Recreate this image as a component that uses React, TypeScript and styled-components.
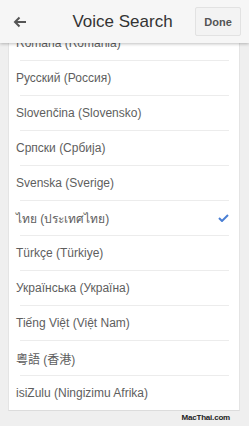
import React from 'react';
import styled, { createGlobalStyle } from 'styled-components';

const GlobalStyle = createGlobalStyle`
    html, body {
        margin: 0;
        padding: 0;
        background: #efefef;
        font-family: 'Liberation Sans', 'Noto Sans', 'Noto Sans CJK TC', sans-serif;
    }
`;

const Screen = styled.div`
    position: relative;
    width: 249px;
    height: 426px;
    overflow: hidden;
    background: #efefef;
`;

const Header = styled.div`
    position: absolute;
    top: 0;
    left: 0;
    right: 0;
    height: 43px;
    z-index: 2;
    display: flex;
    align-items: center;
    background: #f6f6f6;
    box-shadow: 0 1px 3px rgba(0, 0, 0, 0.25);
`;

const BackButton = styled.div`
    width: 40px;
    display: flex;
    justify-content: center;
    align-items: center;
    color: #555;
`;

const Title = styled.div`
    flex: 1;
    text-align: center;
    font-size: 17px;
    color: #333;
    padding-left: 10px;
`;

const DoneButton = styled.div`
    width: 44px;
    height: 27px;
    margin-right: 8px;
    display: flex;
    align-items: center;
    justify-content: center;
    border: 1px solid #e2e2e2;
    border-radius: 2px;
    background: #f3f3f3;
    font-size: 11px;
    font-weight: bold;
    color: #555;
`;

const Content = styled.div`
    padding: 26px 9px 0 8px;
`;

const Card = styled.div`
    background: #fff;
    border-left: 1px solid #e4e4e4;
    border-right: 1px solid #e4e4e4;
    border-bottom: 1px solid #dcdcdc;
    padding: 0 10px 0 11px;
`;

const Row = styled.div<{ $last?: boolean }>`
    height: 34px;
    display: flex;
    align-items: center;
    justify-content: space-between;
    border-bottom: ${({ $last }) => ($last ? 'none' : '1px solid #ececec')};
`;

const Label = styled.span`
    font-size: 12px;
    color: #5e5e5e;
    margin-left: -4px;
`;

const Watermark = styled.div`
    text-align: right;
    padding-right: 10px;
    margin-top: 2px;
    font-size: 8px;
    font-weight: bold;
    color: #222;
    letter-spacing: -0.2px;
`;

const languages = [
    'Română (România)',
    'Русский (Россия)',
    'Slovenčina (Slovensko)',
    'Српски (Србија)',
    'Svenska (Sverige)',
    'ไทย (ประเทศไทย)',
    'Türkçe (Türkiye)',
    'Українська (Україна)',
    'Tiếng Việt (Việt Nam)',
    '粵語 (香港)',
    'isiZulu (Ningizimu Afrika)',
];

const selected = 'ไทย (ประเทศไทย)';

const App: React.FC = () => {
    return (
        <Screen>
            <GlobalStyle />
            <Header>
                <BackButton>
                    <svg width="14" height="12" viewBox="0 0 14 12" fill="none" stroke="#555" strokeWidth="2">
                        <path d="M13 6H2M6.5 1.5L2 6l4.5 4.5" />
                    </svg>
                </BackButton>
                <Title>Voice Search</Title>
                <DoneButton>Done</DoneButton>
            </Header>
            <Content>
                <Card>
                    {languages.map((lang, i) => (
                        <Row key={lang} $last={i === languages.length - 1}>
                            <Label>{lang}</Label>
                            {lang === selected && (
                                <svg width="11" height="8" viewBox="0 0 11 8" fill="none" stroke="#4a7fd4" strokeWidth="2">
                                    <path d="M1 4l3 3 6-6" />
                                </svg>
                            )}
                        </Row>
                    ))}
                </Card>
                <Watermark>MacThai.com</Watermark>
            </Content>
        </Screen>
    );
};

export default App;
